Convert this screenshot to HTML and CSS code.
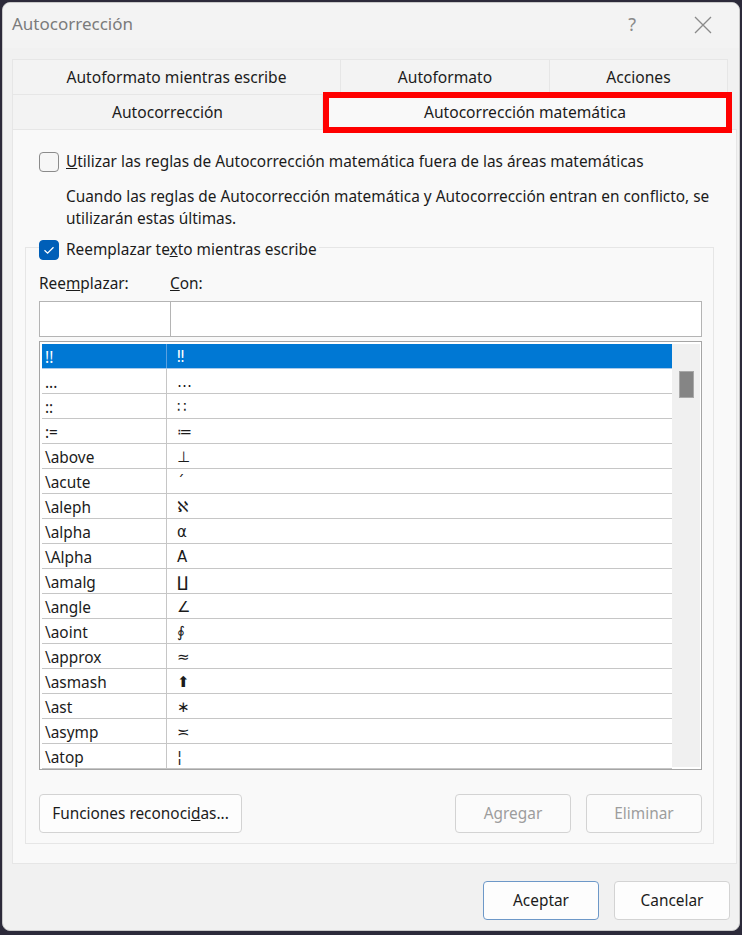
FILE: index.html
```html
<!DOCTYPE html>
<html lang="es">
<head>
    <meta charset="UTF-8">
    <meta name="viewport" content="width=device-width, initial-scale=1.0">
    <title>Autocorrección</title>
    <link rel="stylesheet" href="styles.css">
</head>
<body>

    <div class="dialog">
        <div class="titlebar">
            <span class="title">Autocorrección</span>
            <span class="help">?</span>
            <svg class="close" width="20" height="20" viewBox="0 0 20 20">
                <path d="M2 2 L18 18 M18 2 L2 18" stroke="#8a8a8a" stroke-width="1.3" fill="none"/>
            </svg>
        </div>

        <!-- tabs, two rows -->
        <div class="tabs">
            <div class="tabrow">
                <div class="tab w1">Autoformato mientras escribe</div>
                <div class="tab w2">Autoformato</div>
                <div class="tab w3">Acciones</div>
            </div>
            <div class="tabrow">
                <div class="tab w4">Autocorrección</div>
                <div class="tab active">Autocorrección matemática</div>
            </div>
        </div>

        <div class="panel">
            <div class="check first">
                <span class="box"></span>
                <span><u>U</u>tilizar las reglas de Autocorrección matemática fuera de las áreas matemáticas</span>
            </div>
            <p class="note">Cuando las reglas de Autocorrección matemática y Autocorrección entran en conflicto, se utilizarán estas últimas.</p>

            <fieldset class="group">
                <legend class="check">
                    <span class="box checked">
                        <svg width="20" height="20" viewBox="0 0 20 20">
                            <path d="M5.5 10.2 L8.6 13.2 L14.5 7.2" stroke="#fff" stroke-width="1.3" fill="none"/>
                        </svg>
                    </span>
                    <span>Reemplazar te<u>x</u>to mientras escribe</span>
                </legend>

                <div class="labels">
                    <span class="lbl1">Ree<u>m</u>plazar:</span>
                    <span><u>C</u>on:</span>
                </div>
                <div class="inputs">
                    <div class="in1"></div>
                    <div class="in2"></div>
                </div>

                <div class="list">
                    <div class="rows" id="rows"></div>
                    <div class="scroll"><div class="thumb"></div></div>
                </div>

                <div class="groupbtns">
                    <button class="btn wide">Funciones reconoci<u>d</u>as...</button>
                    <span class="spacer"></span>
                    <button class="btn" disabled>Agregar</button>
                    <button class="btn" disabled>Eliminar</button>
                </div>
            </fieldset>
        </div>

        <div class="footer">
            <button class="btn default">Aceptar</button>
            <button class="btn">Cancelar</button>
        </div>
    </div>

    <script>
        let entries = [
            ["!!", "\u203C"],
            ["...", "\u2026"],
            ["::", "\u2237"],
            [":=", "\u2254"],
            ["\\above", "\u22A5"],
            ["\\acute", "\u00B4"],
            ["\\aleph", "\u2135"],
            ["\\alpha", "\u03B1"],
            ["\\Alpha", "\u0391"],
            ["\\amalg", "\u2210"],
            ["\\angle", "\u2220"],
            ["\\aoint", "\u222E"],
            ["\\approx", "\u2248"],
            ["\\asmash", "\u2B06"],
            ["\\ast", "\u2217"],
            ["\\asymp", "\u224D"],
            ["\\atop", "\u00A6"]
        ];

        let rows = document.getElementById("rows");
        entries.forEach((e, i) => {
            rows.innerHTML += `<div class="row ${i == 0 ? "sel" : ""}">
                <span class="c1">${e[0]}</span>
                <span class="c2">${e[1]}</span>
            </div>`;
        });
    </script>
</body>
</html>
```

FILE: styles.css
```css
body {
    margin: 0;
    background: #2c2a3a;
    font-family: "Noto Sans", "Open Sans", sans-serif;
    font-size: 15.4px;
    color: #1b1b1b;
}

.dialog {
    margin: 2px 0 0 2px;
    width: 738px;
    height: 929px;
    box-sizing: border-box;
    background: #f1f1f1;
    border: 1px solid #c9c9c9;
    border-radius: 8px;
    overflow: hidden;
}

.titlebar {
    height: 45px;
    box-sizing: border-box;
    padding: 0 0 4px 9px;
    display: flex;
    align-items: center;
    background: #f3f3f3;
}
.title {
    font-size: 17px;
    color: #7b7b7b;
    flex: 1;
}
.help {
    font-size: 18px;
    color: #8a8a8a;
    margin-right: 57px;
}
.close {
    margin-right: 26px;
    margin-top: 3px;
}

/* tabs */
.tabs {
    margin: 11px 0 0 9px;
    width: 716px;
}
.tabrow {
    display: flex;
}
.tab {
    height: 35px;
    box-sizing: border-box;
    display: flex;
    align-items: center;
    justify-content: center;
    background: #f3f3f3;
    border-top: 1px solid #e6e6e6;
    border-left: 1px solid #e6e6e6;
    font-size: 15.6px;
}
.w1 { width: 328px; }
.w2 { width: 209px; }
.w3 { width: 179px; border-right: 1px solid #e6e6e6; }
.w4 { width: 310px; }
.tab.active {
    width: 406px;
    background: #f9f9f9;
    position: relative;
    border-right: 1px solid #e6e6e6;
}
.tab.active::after {
    content: "";
    position: absolute;
    top: -3px;
    left: 0;
    right: -5px;
    bottom: -4px;
    border: 6px solid #ff0000;
}

.panel {
    margin-left: 9px;
    width: 725px;
    height: 735px;
    box-sizing: border-box;
    background: #f9f9f9;
    border: 1px solid #e6e6e6;
    padding: 0 0 0 12px;
}

.check {
    display: flex;
    align-items: center;
    line-height: 20px;
}
.check.first {
    margin: 22px 0 0 14px;
}
.box {
    width: 20px;
    height: 20px;
    box-sizing: border-box;
    border: 1px solid #8b8b8b;
    border-radius: 4px;
    background: #f6f6f6;
    margin-right: 7px;
    flex: none;
}
.box.checked {
    background: #005fb8;
    border-color: #005fb8;
}
.box svg {
    display: block;
    margin: -1px;
}

.note {
    margin: 14px 0 0 41px;
    width: 660px;
    line-height: 22px;
}

.group {
    margin: 5px 0 0 0;
    width: 689px;
    box-sizing: border-box;
    border: 1px solid #e6e6e6;
    padding: 0 11px 10px 13px;
}
.group legend {
    padding: 5px 2px 0 0;
}

.labels {
    margin-top: 14px;
    line-height: 20px;
    display: flex;
}
.lbl1 {
    width: 131px;
}

.inputs {
    margin-top: 7px;
    display: flex;
    height: 34px;
    border: 1px solid #b4b4b4;
    background: #fff;
}
.in1 {
    width: 130px;
    border-right: 1px solid #b4b4b4;
}

.list {
    margin-top: 4px;
    height: 429px;
    box-sizing: border-box;
    border: 1px solid #a5a5a5;
    background: #fff;
    padding: 2px 1px 0 2px;
    display: flex;
    overflow: hidden;
}
.rows {
    width: 630px;
}
.row {
    height: 25px;
    box-sizing: border-box;
    border-bottom: 1px solid #c6c6c6;
    display: flex;
    align-items: center;
}
.row.sel {
    background: #0078d4;
    color: #fff;
    border-bottom-color: #a9c9ea;
}
.c1 {
    width: 125px;
    height: 24px;
    box-sizing: border-box;
    line-height: 24px;
    padding: 2px 0 0 3px;
    border-right: 1px solid #c6c6c6;
}
.row.sel .c1 {
    border-right-color: #5aa0e0;
}
.c2 {
    padding: 2px 0 0 10px;
    font-family: "DejaVu Sans", sans-serif;
    font-size: 15px;
}
.scroll {
    width: 28px;
    height: 423px;
    background: #f0f0f0;
}
.thumb {
    margin: 27px 0 0 7px;
    width: 15px;
    height: 27px;
    box-sizing: border-box;
    background: #858585;
    border: 1px solid #a8a8a8;
}

.btn {
    height: 39px;
    width: 116px;
    box-sizing: border-box;
    background: #fdfdfd;
    border: 1px solid #d3d3d3;
    border-radius: 4px;
    font-family: "Noto Sans", "Open Sans", sans-serif;
    font-size: 15.4px;
    color: #1b1b1b;
    padding: 0;
}
.btn:disabled {
    color: #9d9d9d;
    background: #fbfbfb;
}
.btn.wide {
    width: 203px;
}

.groupbtns {
    margin-top: 24px;
    display: flex;
    gap: 15px;
}
.spacer {
    flex: 1;
}

.footer {
    margin-top: 17px;
    display: flex;
    justify-content: flex-end;
    gap: 15px;
    padding-right: 9px;
}
.btn.default {
    border-color: #6d98c8;
}
```
